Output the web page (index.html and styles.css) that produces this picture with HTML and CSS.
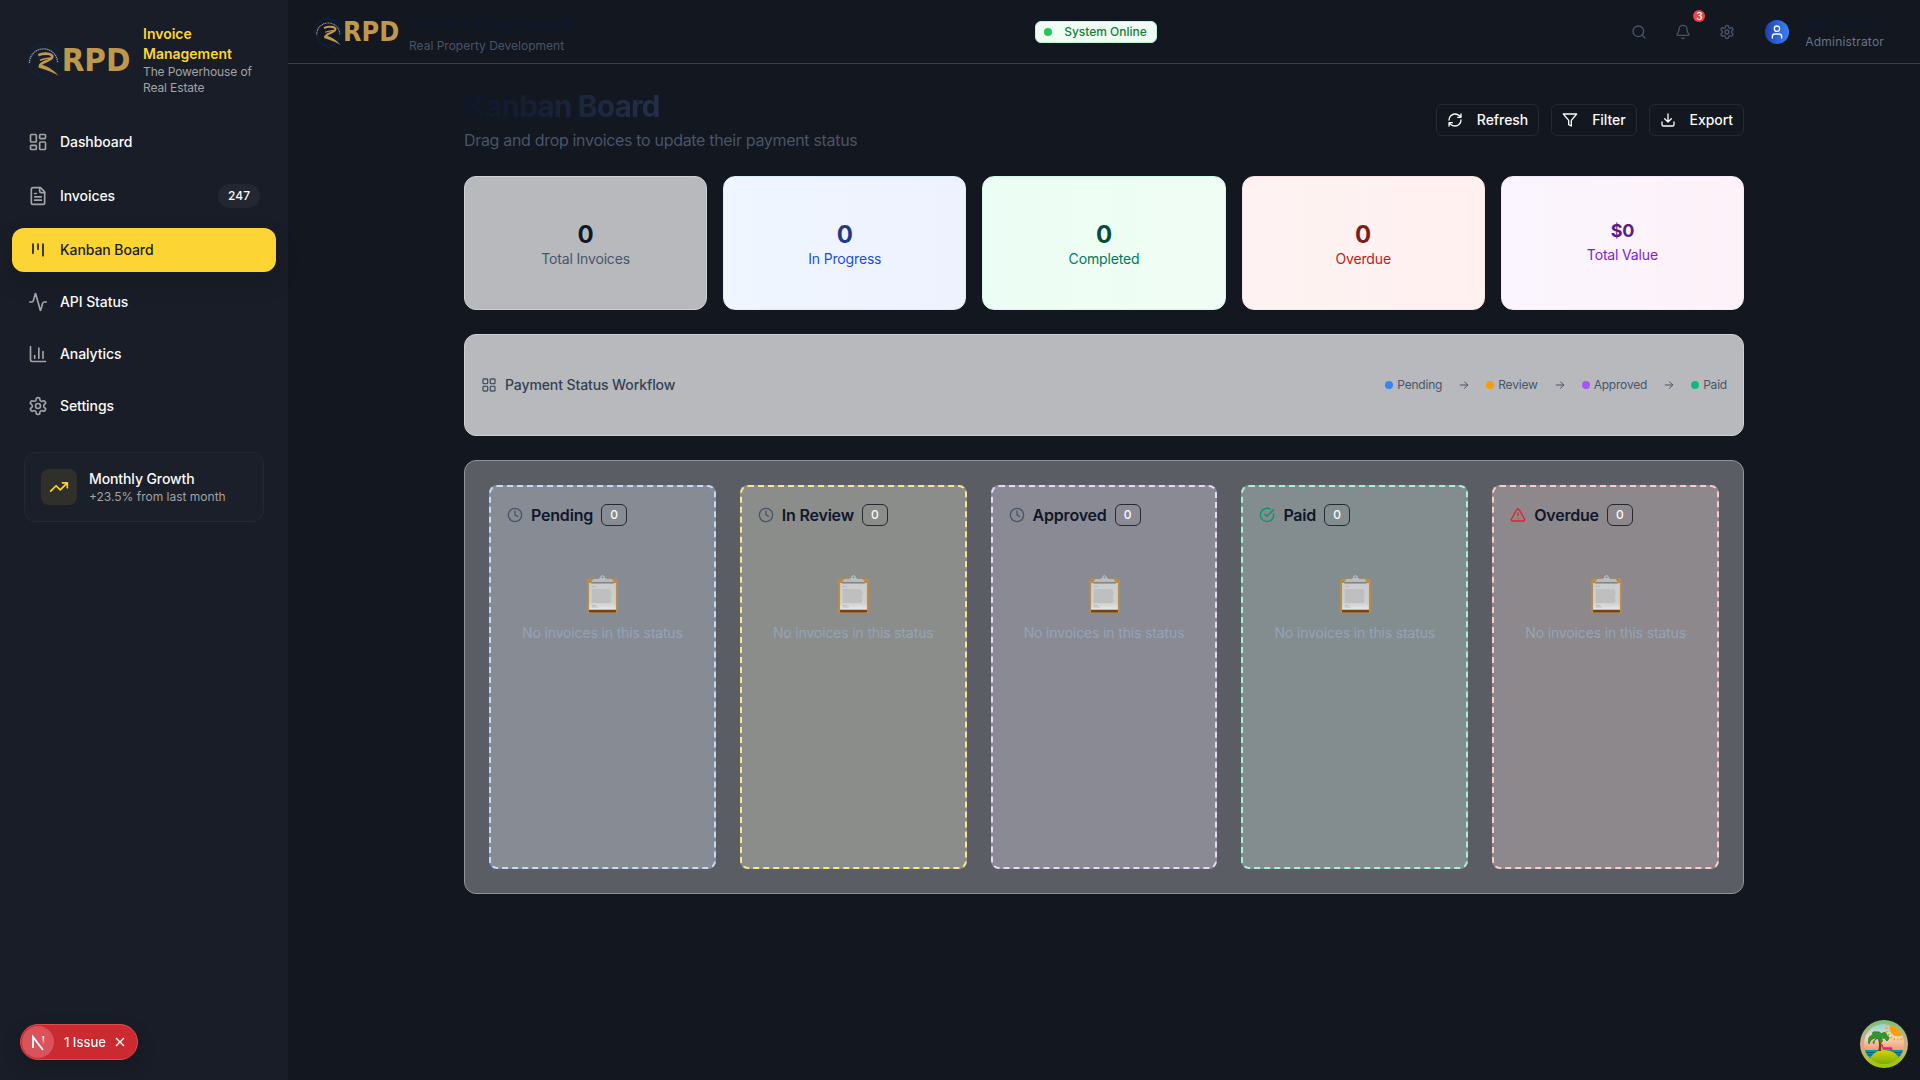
FILE: index.html
```html
<!DOCTYPE html>
<html lang="en">
<head>
<meta charset="utf-8">
<title>Invoice Management</title>
<link rel="stylesheet" href="styles.css">
</head>
<body>
<svg width="0" height="0" class="defs">
  <defs>
    <symbol id="logo" viewBox="0 0 108 42">
      <path d="M20 2l2 5 6-1 4 4 2 7 5 4-5 4-2 7-5 5-5 1-2 4-2-4-6-2-5-5-1-6-4-4 4-3 1-7 5-5 6-1z" fill="none" stroke="#12233f" stroke-width="1.4"/>
      <path d="M5.500 24a14.200 14.200 0 0 1 28.400 0" fill="none" stroke="#93a1b5" stroke-width="1.300" stroke-dasharray="1.300 .7"/>
      <path d="M14.500 16.200C20 13.400 29 14.500 28.600 17.800 28 22 17 22.500 16 27" fill="none" stroke="#bd984d" stroke-width="2.600"/>
      <path d="M16 21.300c4-1.600 7-2 11-2.300" fill="none" stroke="#bd984d" stroke-width="1.600"/>
      <path d="M15.500 25.300C21 26 28 29 35 37 28 32.500 20 30.500 14.500 28.500z" fill="#bd984d"/>
      <text x="38" y="32.600" class="logo-text" textLength="69.500" lengthAdjust="spacingAndGlyphs">RPD</text>
    </symbol>
    <symbol id="dash" viewBox="0 0 24 24"><rect width="7" height="9" x="3" y="3" rx="1"/><rect width="7" height="5" x="14" y="3" rx="1"/><rect width="7" height="9" x="14" y="12" rx="1"/><rect width="7" height="5" x="3" y="16" rx="1"/></symbol>
    <symbol id="file" viewBox="0 0 24 24"><path d="M15 2H6a2 2 0 0 0-2 2v16a2 2 0 0 0 2 2h12a2 2 0 0 0 2-2V7Z"/><path d="M14 2v4a2 2 0 0 0 2 2h4M10 9H8M16 13H8M16 17H8"/></symbol>
    <symbol id="kanban" viewBox="0 0 24 24"><path d="M6 5v11M12 5v6M18 5v14"/></symbol>
    <symbol id="activity" viewBox="0 0 24 24"><path d="M22 12h-2.48a2 2 0 0 0-1.93 1.46l-2.35 8.36a.25.25 0 0 1-.48 0L9.24 2.18a.25.25 0 0 0-.48 0l-2.35 8.36A2 2 0 0 1 4.49 12H2"/></symbol>
    <symbol id="chart" viewBox="0 0 24 24"><path d="M3 3v16a2 2 0 0 0 2 2h16M18 17V9M13 17V5M8 17v-3"/></symbol>
    <symbol id="gear" viewBox="0 0 24 24"><path d="M12.22 2h-.44a2 2 0 0 0-2 2v.18a2 2 0 0 1-1 1.73l-.43.25a2 2 0 0 1-2 0l-.15-.08a2 2 0 0 0-2.73.73l-.22.38a2 2 0 0 0 .73 2.73l.15.1a2 2 0 0 1 1 1.72v.51a2 2 0 0 1-1 1.74l-.15.09a2 2 0 0 0-.73 2.73l.22.38a2 2 0 0 0 2.73.73l.15-.08a2 2 0 0 1 2 0l.43.25a2 2 0 0 1 1 1.73V20a2 2 0 0 0 2 2h.44a2 2 0 0 0 2-2v-.18a2 2 0 0 1 1-1.73l.43-.25a2 2 0 0 1 2 0l.15.08a2 2 0 0 0 2.73-.73l.22-.39a2 2 0 0 0-.73-2.73l-.15-.08a2 2 0 0 1-1-1.74v-.5a2 2 0 0 1 1-1.74l.15-.09a2 2 0 0 0 .73-2.73l-.22-.38a2 2 0 0 0-2.73-.73l-.15.08a2 2 0 0 1-2 0l-.43-.25a2 2 0 0 1-1-1.73V4a2 2 0 0 0-2-2z"/><circle cx="12" cy="12" r="3"/></symbol>
    <symbol id="trend" viewBox="0 0 24 24"><path d="M22 7l-8.5 8.5-5-5L2 17M16 7h6v6"/></symbol>
    <symbol id="search" viewBox="0 0 24 24"><circle cx="11" cy="11" r="8"/><path d="m21 21-4.3-4.3"/></symbol>
    <symbol id="bell" viewBox="0 0 24 24"><path d="M10.268 21a2 2 0 0 0 3.464 0M3.262 15.326A1 1 0 0 0 4 17h16a1 1 0 0 0 .74-1.673C19.41 13.956 18 12.499 18 8A6 6 0 0 0 6 8c0 4.499-1.411 5.956-2.738 7.326"/></symbol>
    <symbol id="user" viewBox="0 0 24 24"><path d="M19 21v-2a4 4 0 0 0-4-4H9a4 4 0 0 0-4 4v2"/><circle cx="12" cy="7" r="4"/></symbol>
    <symbol id="refresh" viewBox="0 0 24 24"><path d="M3 12a9 9 0 0 1 9-9 9.75 9.75 0 0 1 6.74 2.74L21 8M21 3v5h-5M21 12a9 9 0 0 1-9 9 9.75 9.75 0 0 1-6.74-2.74L3 16M8 16H3v5"/></symbol>
    <symbol id="filter" viewBox="0 0 24 24"><path d="M22 3H2l8 9.46V19l4 2v-8.54z"/></symbol>
    <symbol id="download" viewBox="0 0 24 24"><path d="M21 15v4a2 2 0 0 1-2 2H5a2 2 0 0 1-2-2v-4M7 10l5 5 5-5M12 15V3"/></symbol>
    <symbol id="grid" viewBox="0 0 24 24"><rect width="7" height="7" x="3" y="3" rx="1"/><rect width="7" height="7" x="14" y="3" rx="1"/><rect width="7" height="7" x="14" y="14" rx="1"/><rect width="7" height="7" x="3" y="14" rx="1"/></symbol>
    <symbol id="arrow" viewBox="0 0 24 24"><path d="M4.500 12h15M13 5.500l6.500 6.500-6.500 6.500"/></symbol>
    <symbol id="clock" viewBox="0 0 24 24"><circle cx="12" cy="12" r="10"/><path d="M12 6v6l4 2"/></symbol>
    <symbol id="check" viewBox="0 0 24 24"><path d="M21.801 10A10 10 0 1 1 17 3.335M9 11l3 3L22 4"/></symbol>
    <symbol id="warn" viewBox="0 0 24 24"><path d="m21.73 18-8-14a2 2 0 0 0-3.48 0l-8 14A2 2 0 0 0 4 21h16a2 2 0 0 0 1.73-3M12 9v4M12 17h.01"/></symbol>
    <linearGradient id="paper" x2="0" y2="1"><stop offset="0" stop-color="#cbcccd"/><stop offset=".75" stop-color="#d0d0d0"/><stop offset="1" stop-color="#e7e7e7"/></linearGradient>
    <symbol id="clipboard" viewBox="0 0 32 38" preserveAspectRatio="none">
      <rect x="1" y="3.500" width="30" height="34.500" rx="1.500" fill="#b98c4b"/>
      <rect x="3" y="35" width="26" height="2.400" fill="#6f4420"/>
      <path d="M3 8h26v26.500H3z" fill="url(#paper)"/>
      <path d="M5.500 14h18l1.500 4-1 4 1 4-2 2H5.500z" fill="#bfbfbf"/>
      <path d="M5.500 11.500h4M5.500 30.500h4M5.500 32h6" stroke="#aeb0b2" stroke-width=".7"/>
      <path d="M5 8.500h22V7.500l-2-3.500h-5l-2-1.500a2.200 2.200 0 0 0-4 0L12 4H7L5 7.500z" fill="#b5bbc0"/>
      <path d="M5 7h22v1.500H5z" fill="#85857f"/>
      <circle cx="16" cy="2.400" r="1.700" fill="#8d96a1" stroke="#c3ccd4" stroke-width=".9"/>
    </symbol>
    <linearGradient id="nfade" gradientUnits="userSpaceOnUse" x1="0" y1="10" x2="0" y2="19"><stop stop-color="#fff"/><stop offset="1" stop-color="#fff" stop-opacity="0"/></linearGradient>
    <linearGradient id="ring" x2="0" y2="1"><stop offset="0" stop-color="#79c275"/><stop offset=".5" stop-color="#dba98a"/><stop offset="1" stop-color="#9dc800"/></linearGradient>
    <linearGradient id="sky" x2="0" y2="1"><stop offset="0" stop-color="#70cfe4"/><stop offset=".35" stop-color="#efdcc0"/><stop offset=".7" stop-color="#ff8660"/></linearGradient>
    <linearGradient id="island" x2="0" y2="1"><stop offset="0" stop-color="#d6d500"/><stop offset="1" stop-color="#5ca300"/></linearGradient>
    <clipPath id="scene"><circle cx="24" cy="24" r="20"/></clipPath>
  </defs>
</svg>

<div class="app">
  <aside class="sidebar">
    <div class="brand">
      <svg class="brand-logo"><use href="#logo"/></svg>
      <div>
        <div class="brand-name">Invoice Management</div>
        <div class="brand-tag">The Powerhouse of Real Estate</div>
      </div>
    </div>
    <nav class="nav">
      <a class="nav-item"><svg class="icon"><use href="#dash"/></svg>Dashboard</a>
      <a class="nav-item"><svg class="icon"><use href="#file"/></svg>Invoices<span class="nav-count">247</span></a>
      <a class="nav-item active"><svg class="icon"><use href="#kanban"/></svg>Kanban Board</a>
      <a class="nav-item"><svg class="icon"><use href="#activity"/></svg>API Status</a>
      <a class="nav-item"><svg class="icon"><use href="#chart"/></svg>Analytics</a>
      <a class="nav-item"><svg class="icon"><use href="#gear"/></svg>Settings</a>
    </nav>
    <div class="growth">
      <div class="growth-icon"><svg class="icon"><use href="#trend"/></svg></div>
      <div>
        <div class="growth-title">Monthly Growth</div>
        <div class="growth-note">+23.5% from last month</div>
      </div>
    </div>
  </aside>

  <div class="page">
    <header class="topbar">
      <div class="topbar-brand">
        <svg class="topbar-logo"><use href="#logo"/></svg>
        <div>
          <div class="topbar-title">Invoice Dashboard</div>
          <div class="topbar-sub">Real Property Development</div>
        </div>
      </div>
      <div class="online"><i></i>System Online</div>
      <div class="topbar-right">
        <button class="tool"><svg class="icon"><use href="#search"/></svg></button>
        <button class="tool"><svg class="icon"><use href="#bell"/></svg><span class="alert">3</span></button>
        <button class="tool"><svg class="icon"><use href="#gear"/></svg></button>
        <div class="avatar"><svg class="icon"><use href="#user"/></svg></div>
        <div class="user">
          <div class="user-name">RPD Admin</div>
          <div class="user-role">Administrator</div>
        </div>
      </div>
    </header>

    <main class="content">
      <div class="heading">
        <div>
          <h1>Kanban Board</h1>
          <p>Drag and drop invoices to update their payment status</p>
        </div>
        <div class="actions">
          <button class="btn"><svg class="icon"><use href="#refresh"/></svg>Refresh</button>
          <button class="btn"><svg class="icon"><use href="#filter"/></svg>Filter</button>
          <button class="btn"><svg class="icon"><use href="#download"/></svg>Export</button>
        </div>
      </div>

      <section class="stats">
        <div class="stat total"><b>0</b><span>Total Invoices</span></div>
        <div class="stat progress"><b>0</b><span>In Progress</span></div>
        <div class="stat completed"><b>0</b><span>Completed</span></div>
        <div class="stat late"><b>0</b><span>Overdue</span></div>
        <div class="stat value"><b>$0</b><span>Total Value</span></div>
      </section>

      <section class="workflow">
        <div class="workflow-title"><svg class="icon"><use href="#grid"/></svg>Payment Status Workflow</div>
        <div class="steps">
          <span class="step blue"><i></i>Pending</span>
          <svg class="icon"><use href="#arrow"/></svg>
          <span class="step amber"><i></i>Review</span>
          <svg class="icon"><use href="#arrow"/></svg>
          <span class="step violet"><i></i>Approved</span>
          <svg class="icon"><use href="#arrow"/></svg>
          <span class="step green"><i></i>Paid</span>
        </div>
      </section>

      <section class="board">
        <div class="column pending">
          <h3><svg class="icon"><use href="#clock"/></svg>Pending<span>0</span></h3>
          <div class="empty"><svg><use href="#clipboard"/></svg><p>No invoices in this status</p></div>
        </div>
        <div class="column review">
          <h3><svg class="icon"><use href="#clock"/></svg>In Review<span>0</span></h3>
          <div class="empty"><svg><use href="#clipboard"/></svg><p>No invoices in this status</p></div>
        </div>
        <div class="column approved">
          <h3><svg class="icon"><use href="#clock"/></svg>Approved<span>0</span></h3>
          <div class="empty"><svg><use href="#clipboard"/></svg><p>No invoices in this status</p></div>
        </div>
        <div class="column paid">
          <h3><svg class="icon"><use href="#check"/></svg>Paid<span>0</span></h3>
          <div class="empty"><svg><use href="#clipboard"/></svg><p>No invoices in this status</p></div>
        </div>
        <div class="column overdue">
          <h3><svg class="icon"><use href="#warn"/></svg>Overdue<span>0</span></h3>
          <div class="empty"><svg><use href="#clipboard"/></svg><p>No invoices in this status</p></div>
        </div>
      </section>
    </main>
  </div>
</div>

<div class="issues">
  <div class="issues-mark">
    <svg width="32" height="32" viewBox="0 0 32 32" fill="none"><path d="M11 22V11l10 13" stroke="#fff" stroke-width="1.800"/><path d="M21.300 10v9" stroke="url(#nfade)" stroke-width="1.700"/></svg>
  </div>
  <span>1 Issue</span>
  <svg width="10" height="10" viewBox="0 0 10 10"><path d="M1 1l8 8M9 1L1 9" stroke="#fff" stroke-width="1.300"/></svg>
</div>

<svg class="devtools" width="48" height="48" viewBox="0 0 48 48">
  <circle cx="24" cy="24" r="24" fill="url(#ring)"/>
  <g clip-path="url(#scene)">
    <rect width="48" height="48" fill="url(#sky)"/>
    <circle cx="38" cy="8" r="11.500" fill="none" stroke="#f9a21b" stroke-width="2.600" stroke-dasharray="1.300 2.200"/>
    <circle cx="38" cy="8" r="8.500" fill="#ff9d0a"/>
    <path d="M4 30h40v8H4z" fill="#0097ab"/>
    <path d="M4 32.500h40M4 35h40" stroke="#015064" stroke-width=".8"/>
    <path d="M8 42q5-12 16-12 12 0 16 10l-8 8H14z" fill="url(#island)"/>
    <path d="M18 31q2-6 0-12l2-1q2 7 1 13z" fill="#714017"/>
    <path d="M18 18q-7-1-9 6-2-8 4-9-2-4 4-3 3-1 4 2 5-4 6 2 4 1 0 5-2-4-6-3 3 3 0 5-1-4-4-5-4 3-3 6-3-3 4-6z" fill="#349530" stroke="#2d8a2c" stroke-width="1"/>
    <path d="M21.500 24l2 5h8v2M24 28h8" fill="none" stroke="#e8256c" stroke-width="1.600"/>
  </g>
</svg>
</body>
</html>
```
FILE: styles.css
```css
* { box-sizing: border-box; }
body {
  margin: 0;
  background: #131720;
  color: #fafafa;
  font-family: Inter, "Liberation Sans", sans-serif;
  font-size: 14px;
  line-height: 20px;
}
h1, h3, p { margin: 0; }
button { font: inherit; color: inherit; background: none; border: 0; padding: 0; }
.defs { position: absolute; }
.icon {
  flex: none;
  width: 16px;
  height: 16px;
  fill: none;
  stroke: currentColor;
  stroke-width: 2;
  stroke-linecap: round;
  stroke-linejoin: round;
}
.logo-text { font: 700 33px "DejaVu Sans", sans-serif; fill: #bd984d; }
.app { display: flex; height: 1080px; overflow: hidden; }

/* Sidebar */
.sidebar { width: 288px; flex: none; background: #191d27; }
.brand {
  display: flex;
  align-items: center;
  gap: 12px;
  height: 120px;
  padding: 0 28px 0 24px;
}
.brand > div { flex: 1; }
.brand-logo { width: 107px; height: 42px; flex: none; }
.brand-name { color: #fcd535; font-weight: 600; }
.brand-tag { color: #a3a3a3; font-size: 12px; line-height: 16px; letter-spacing: -.12px; }
.nav { display: flex; flex-direction: column; gap: 8px; padding: 0 12px; }
.nav-item {
  display: flex;
  align-items: center;
  gap: 12px;
  min-height: 44px;
  padding: 12px 16px;
  border-radius: 12px;
  font-weight: 500;
  letter-spacing: -.08px;
}
.nav-item .icon { width: 20px; height: 20px; color: #a3a3a3; }
.nav-item.active {
  background: #fcd535;
  color: #191d27;
  box-shadow: 0 10px 24px rgba(0, 0, 0, .14);
}
.nav-item.active .icon { color: #191d27; }
.nav-count {
  margin-left: auto;
  padding: 4px 10px;
  border-radius: 12px;
  background: #242731;
  font-size: 12px;
  font-weight: 450;
  letter-spacing: 0;
  line-height: 16px;
}
.growth {
  display: flex;
  align-items: center;
  gap: 12px;
  height: 70px;
  margin: 24px;
  padding: 0 16px;
  border: 1px solid #252932;
  border-radius: 12px;
  background: #1a1f29;
}
.growth-icon {
  display: grid;
  place-items: center;
  width: 36px;
  height: 36px;
  border-radius: 8px;
  background: #302f29;
  color: #fcd535;
}
.growth-icon .icon { width: 20px; height: 20px; }
.growth-title { font-weight: 500; letter-spacing: -.1px; }
.growth-note { color: #a3a3a3; font-size: 12px; line-height: 16px; }

/* Top bar */
.page { flex: 1; min-width: 0; }
.topbar {
  display: grid;
  grid-template-columns: 1fr auto 1fr;
  align-items: center;
  height: 64px;
  padding: 0 36px 0 24px;
  border-bottom: 1px solid #3b3f49;
}
.topbar-brand { display: flex; align-items: center; gap: 9px; }
.topbar-logo { width: 88px; height: 34px; }
.topbar-title { color: #0f172a; font-size: 18px; font-weight: 700; line-height: 28px; }
.topbar-sub { color: #475569; font-size: 12px; line-height: 16px; }
.online {
  display: flex;
  align-items: center;
  gap: 12px;
  height: 22px;
  margin-right: 4px;
  padding: 0 9px 0 8px;
  border: 1px solid #bbf7d0;
  border-radius: 6px;
  background: #f0fdf4;
  color: #15803d;
  font-size: 12px;
  font-weight: 500;
}
.online i { width: 8px; height: 8px; border-radius: 50%; background: #22c55e; }
.topbar-right { display: flex; align-items: center; justify-content: flex-end; }
.tool {
  position: relative;
  display: grid;
  place-items: center;
  width: 36px;
  height: 36px;
  margin-right: 8px;
  color: #475569;
}
.alert {
  position: absolute;
  top: -4px;
  right: -4px;
  width: 12px;
  height: 12px;
  border-radius: 50%;
  background: #ef4444;
  color: #fff;
  font-size: 10px;
  font-weight: 500;
  line-height: 12px;
}
.avatar {
  display: grid;
  place-items: center;
  width: 24px;
  height: 24px;
  margin: 0 16px 0 12px;
  border-radius: 50%;
  background: linear-gradient(90deg, #1e40af, #3b82f6);
}
.user-name { color: #0f172a; font-weight: 500; }
.user-role { color: #64748b; font-size: 12px; line-height: 16px; letter-spacing: .2px; }

/* Page heading */
.content { width: 1280px; margin: 24px auto 0; }
.heading { display: flex; align-items: center; justify-content: space-between; height: 64px; }
.heading h1 {
  width: max-content;
  background: linear-gradient(90deg, #0f172a, #233047);
  background-clip: text;
  -webkit-background-clip: text;
  color: transparent;
  font-size: 30px;
  letter-spacing: -.9px;
  line-height: 36px;
}
.heading p { margin-top: 4px; color: #475569; font-size: 16px; line-height: 24px; letter-spacing: -.32px; }
.actions { display: flex; gap: 12px; }
.btn {
  display: flex;
  align-items: center;
  gap: 14px;
  height: 32px;
  padding: 0 10px;
  border: 1px solid #252932;
  border-radius: 6px;
  font-weight: 500;
  letter-spacing: -.06px;
}

/* Summary cards */
.stats { display: grid; grid-template-columns: repeat(5, 1fr); gap: 16px; margin-top: 24px; }
.stat {
  display: flex;
  flex-direction: column;
  align-items: center;
  height: 134px;
  padding-top: 40px;
  border: 1px solid;
  border-radius: 12px;
  letter-spacing: -.16px;
}
.stat b { padding-top: 3px; font-size: 24px; line-height: 29px; letter-spacing: 0; }
.total { background: #b8b9bc; border-color: #cbd0d5; color: #475569; }
.total b { color: #0f172a; }
.progress { background: linear-gradient(90deg, #eff6ff, #eef2ff); border-color: #dbeafe; color: #1d4ed8; }
.progress b { color: #1e3a8a; }
.completed { background: linear-gradient(90deg, #ecfdf5, #f0fdf4); border-color: #d1fae5; color: #047857; }
.completed b { color: #064e3b; }
.late { background: linear-gradient(90deg, #fef2f2, #fff1f0); border-color: #fee2e2; color: #b91c1c; }
.late b { color: #7f1d1d; }
.value { background: linear-gradient(90deg, #faf5ff, #fdf2f8); border-color: #f3e8ff; color: #7e22ce; }
.value b { padding-top: 0; color: #581c87; font-size: 18px; line-height: 28px; letter-spacing: -.3px; }

/* Workflow legend */
.workflow {
  display: flex;
  align-items: center;
  justify-content: space-between;
  height: 102px;
  margin-top: 24px;
  padding: 0 16px;
  border: 1px solid #cbd0d5;
  border-radius: 12px;
  background: #b8b9bc;
  color: #475569;
}
.workflow-title {
  display: flex;
  align-items: center;
  gap: 8px;
  color: #334155;
  font-weight: 500;
  letter-spacing: -.1px;
}
.workflow-title .icon { color: #475569; }
.steps {
  display: flex;
  align-items: center;
  gap: 16px;
  font-size: 12px;
  line-height: 16px;
  letter-spacing: -.2px;
}
.steps .icon { width: 12px; height: 12px; }
.step { display: flex; align-items: center; gap: 4px; }
.step i { width: 8px; height: 8px; border-radius: 50%; }
.blue i { background: #3b82f6; }
.amber i { background: #f59e0b; }
.violet i { background: #a855f7; }
.green i { background: #10b981; }

/* Board */
.board {
  display: grid;
  grid-template-columns: repeat(5, 1fr);
  gap: 24px;
  height: 434px;
  margin-top: 24px;
  padding: 24px;
  border: 1px solid #8f949d;
  border-radius: 12px;
  background: #5a5d64;
}
.column { padding: 16px; border: 2px dashed; border-radius: 8px; }
.pending { background: #868b94; border-color: #bfdbfe; }
.review { background: #8b8d8a; border-color: #fde68a; }
.approved { background: #8a8a94; border-color: #e9d5ff; }
.paid { background: #838c8e; border-color: #a7f3d0; }
.overdue { background: #8c888c; border-color: #fecaca; }
.column h3 {
  display: flex;
  align-items: center;
  gap: 8px;
  height: 24px;
  color: #0f172a;
  font-size: 16px;
  font-weight: 600;
  letter-spacing: -.2px;
}
.column h3 .icon { color: #475569; }
.paid h3 .icon { color: #059669; }
.overdue h3 .icon { color: #dc2626; }
.column h3 span {
  width: 26px;
  height: 22px;
  border: 1px solid #252932;
  border-radius: 6px;
  color: #fafafa;
  font-size: 12px;
  font-weight: 500;
  line-height: 20px;
  text-align: center;
}
.empty {
  display: flex;
  flex-direction: column;
  align-items: center;
  padding-top: 48px;
  color: #94a3b8;
}
.empty svg { width: 33px; height: 38px; margin-left: 1px; }
.empty p { margin-top: 10px; letter-spacing: -.15px; }

/* Floating developer widgets */
.issues {
  position: fixed;
  left: 20px;
  bottom: 20px;
  display: flex;
  align-items: center;
  width: 118px;
  height: 36px;
  padding: 1px;
  border: 1px solid #e5484d;
  border-radius: 18px;
  background: #ca2a30;
  box-shadow: 0 8px 20px rgba(0, 0, 0, .15);
  font-size: 13px;
  font-weight: 500;
}
.issues-mark { height: 32px; border-radius: 50%; background: #d9545a; }
.issues span { margin: 0 9px 0 10px; }
.devtools { position: fixed; right: 12px; bottom: 12px; }
```
